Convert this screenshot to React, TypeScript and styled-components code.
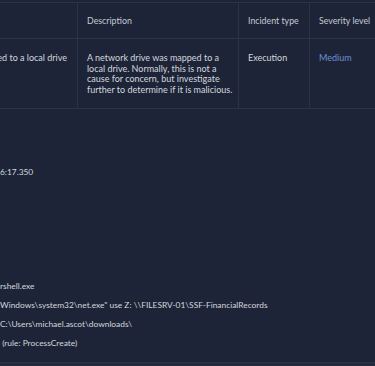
import React from 'react';
import styled, { createGlobalStyle } from 'styled-components';

const colors = {
  bg: '#1d2437',
  line: '#2b3347',
  head: '#c5cad3',
  text: '#d3d7de',
  accent: '#6d8fd6',
};

type Incident = {
  name: string;
  description: string;
  type: string;
  severity: string;
};

const incident: Incident = {
  name: 'Network drive mapped to a local drive',
  description:
    'A network drive was mapped to a local drive. Normally, this is not a cause for concern, but investigate further to determine if it is malicious.',
  type: 'Execution',
  severity: 'Medium',
};

const details: string[] = [
  '6:17.350',
  '',
  '',
  '',
  '',
  '',
  'rshell.exe',
  'Windows\\system32\\net.exe" use Z: \\\\FILESRV-01\\SSF-FinancialRecords',
  'C:\\Users\\michael.ascot\\downloads\\',
  ' (rule: ProcessCreate)',
];

const GlobalStyle = createGlobalStyle`
  html, body {
    margin: 0;
    padding: 0;
    background: ${colors.bg};
    overflow: hidden;
  }
  body {
    font-family: Lato, 'Open Sans', sans-serif;
    color: ${colors.text};
  }
`;

function App() {
  return (
    <Page>
      <GlobalStyle />
      <Table>
        <colgroup>
          <col style={{ width: 200 }} />
          <col style={{ width: 161 }} />
          <col style={{ width: 71 }} />
          <col style={{ width: 120 }} />
        </colgroup>
        <thead>
          <tr>
            <HeadCell>Name</HeadCell>
            <HeadCell>Description</HeadCell>
            <HeadCell>Incident type</HeadCell>
            <HeadCell>Severity level</HeadCell>
          </tr>
        </thead>
        <tbody>
          <tr>
            <NameCell>{incident.name}</NameCell>
            <DescriptionCell>{incident.description}</DescriptionCell>
            <BodyCell>{incident.type}</BodyCell>
            <BodyCell $accent>{incident.severity}</BodyCell>
          </tr>
        </tbody>
      </Table>
      <Details>
        {details.map((value, i) => (
          <DetailRow key={i}>{value || '\u00a0'}</DetailRow>
        ))}
      </Details>
      <Footer />
    </Page>
  );
}

const Page = styled.div`
  width: 375px;
  height: 366px;
  overflow: hidden;
  display: flex;
  flex-direction: column;
`;

const Table = styled.table`
  table-layout: fixed;
  border-collapse: collapse;
  width: 552px;
  margin-left: -123px;
  margin-top: 2px;
  font-size: 9px;
`;

const HeadCell = styled.th`
  height: 35px;
  padding: 0 9px;
  text-align: left;
  font-size: 8.8px;
  font-weight: 400;
  color: ${colors.head};
  vertical-align: middle;
  border: 1px solid ${colors.line};
  white-space: nowrap;
`;

const BodyCell = styled.td<{ $accent?: boolean }>`
  height: 55px;
  padding: 14px 9px 0;
  vertical-align: top;
  line-height: 10.7px;
  color: ${(p) => (p.$accent ? colors.accent : colors.text)};
  border: 1px solid ${colors.line};
`;

const NameCell = styled(BodyCell)`
  text-align: right;
  padding-right: 10px;
  white-space: nowrap;
  overflow: hidden;
`;

const DescriptionCell = styled(BodyCell)`
  padding-right: 3px;
`;

const Details = styled.div`
  display: flex;
  flex-direction: column;
  margin-top: 54px;
  font-size: 8.4px;
`;

const DetailRow = styled.div`
  height: 19px;
  line-height: 19px;
  white-space: pre;
  color: ${colors.text};
`;

const Footer = styled.div`
  margin-top: auto;
  height: 3px;
  background: #222a3d;
  border-top: 1px solid ${colors.line};
`;

export default App;
